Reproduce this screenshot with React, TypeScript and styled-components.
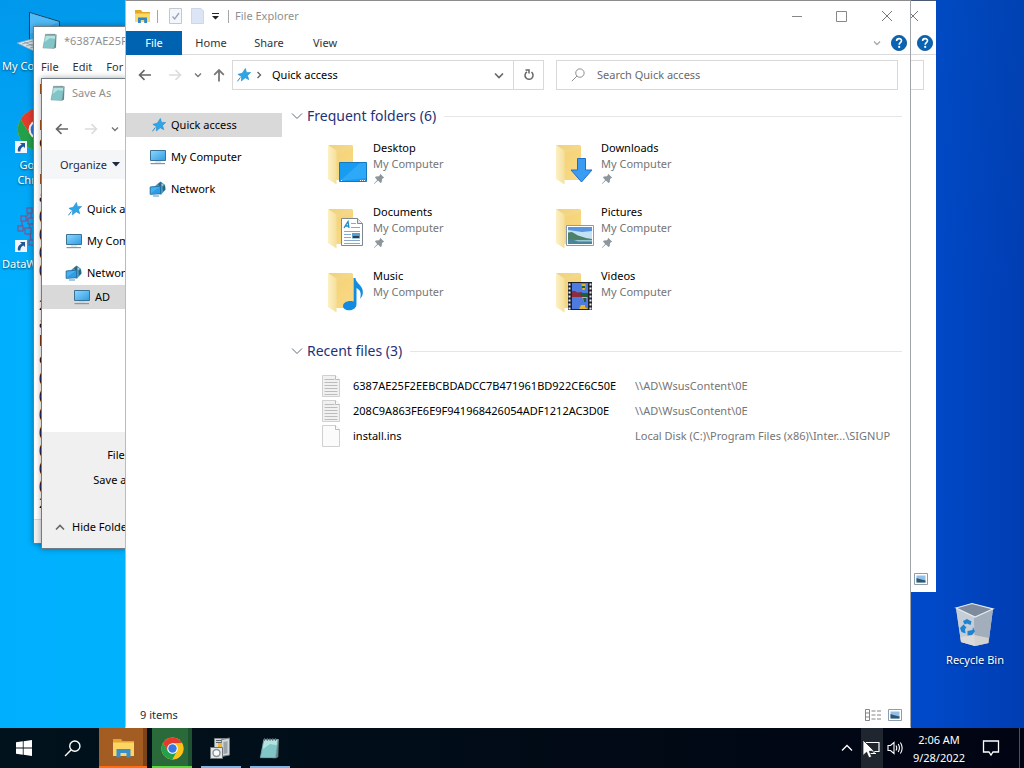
import React from 'react';
import styled, { createGlobalStyle } from 'styled-components';

const GlobalStyle = createGlobalStyle`
  * { box-sizing: border-box; }
  body {
    margin: 0;
    overflow: hidden;
    font-family: 'Noto Sans', 'Open Sans', sans-serif;
    font-size: 11px;
    line-height: 16px;
    color: #000;
  }
  button, input, textarea { font: inherit; color: inherit; }
  button { padding: 0; border: 0; background: none; }
  svg { display: block; flex: none; }
  ul { list-style: none; margin: 0; padding: 0; }
`;

/* ---------- desktop ---------- */

const Screen = styled.div`
  display: flex;
  flex-direction: column;
  height: 100vh;
`;

const Desktop = styled.main`
  position: relative;
  flex: 1;
  overflow: hidden;
  background:
    linear-gradient(180deg, rgba(0, 80, 180, 0.25) 0, rgba(0, 80, 180, 0) 300px),
    linear-gradient(90deg, #00b0ff 0, #00b2fd 12%, #0060d8 60%, #0049c8 91%, #003db2 100%);
`;

const Shortcut = styled.a<{ $left?: number; $right?: number; $top: number; $align?: string }>`
  position: absolute;
  top: ${p => p.$top}px;
  ${p => (p.$right === undefined ? `left: ${p.$left}px;` : `right: ${p.$right}px;`)}
  width: 72px;
  display: flex;
  flex-direction: column;
  align-items: center;
  gap: 2px;
  color: #fff;
  text-decoration: none;
  text-align: center;
  text-shadow: 0 1px 2px rgba(0, 0, 0, 0.6);
  span { align-self: stretch; text-align: ${p => p.$align || 'center'}; line-height: 15px; white-space: nowrap; }
`;

const Win = styled.section`
  position: absolute;
  display: flex;
  flex-direction: column;
  background: #fff;
  border: 1px solid #6f7b85;
  overflow: hidden;
`;

const NotepadWin = styled(Win)`
  left: 33px; top: 26px; width: 93px; height: 518px;
  box-shadow: 0 0 6px rgba(0, 0, 0, 0.35);
`;
const SaveWin = styled(Win)`
  left: 41px; top: 78px; width: 85px; height: 471px;
  box-shadow: 0 0 6px rgba(0, 0, 0, 0.35);
`;
const BackWin = styled(Win)`
  left: 300px; right: 88px; top: 0; height: 592px;
  border-color: #4a5a70 #fff #fff;
  border-right: 0;
`;
const FrontWin = styled(Win)`
  left: 125px; right: 113px; top: 0; bottom: 0;
  border-color: #8c8c8c #a0a4a8 #fff #9cc4dc;
`;

/* ---------- shared window parts ---------- */

const TitleRow = styled.header<{ $h: number; $pad: number }>`
  display: flex;
  flex: none;
  align-items: center;
  gap: 6px;
  height: ${p => p.$h}px;
  padding-left: ${p => p.$pad}px;
  color: #8f8f8f;
  white-space: nowrap;
`;

const Grow = styled.div`flex: 1;`;

const Caption = styled.button`
  width: 45px;
  height: 28px;
  display: grid;
  place-items: center;
`;
const Captions = styled.div`
  display: flex;
  margin-right: 1px;
`;

const Tiny = styled.button<{ $w: number }>`
  flex: none;
  width: ${p => p.$w}px;
  height: 24px;
  display: grid;
  place-items: center;
`;

const Divider = styled.i`
  width: 1px;
  height: 13px;
  background: #a5a5a5;
`;

const QuickButtons = styled.div`
  display: flex;
`;

/* ---------- explorer ---------- */

const Ribbon = styled.nav`
  display: flex;
  align-items: center;
  height: 24px;
  border-bottom: 1px solid #dadbdc;
  padding-right: 3px;
  color: #333;
`;
const FileTab = styled.button`
  width: 56px;
  height: 24px;
  background: #0063b1;
  color: #fff;
`;
const Tab = styled.button<{ $w: number }>`
  width: ${p => p.$w}px;
  height: 24px;
`;

const AddressRow = styled.div`
  display: flex;
  align-items: center;
  height: 40px;
  padding-right: 12px;
`;
const AddressBox = styled.div`
  flex: 1;
  display: flex;
  align-items: center;
  height: 30px;
  margin-left: 4px;
  padding-left: 4px;
  border: 1px solid #d9d9d9;
  span { flex: 1; padding-left: 5px; }
`;
const RefreshButton = styled.button`
  width: 30px;
  height: 28px;
  border-left: 1px solid #d9d9d9;
  display: grid;
  place-items: center;
`;
const SearchBox = styled.label`
  width: 342px;
  height: 30px;
  margin-left: 12px;
  padding-left: 14px;
  display: flex;
  align-items: center;
  gap: 12px;
  border: 1px solid #d9d9d9;
  input {
    flex: 1;
    min-width: 0;
    border: 0;
    padding: 0;
    outline: 0;
    background: none;
  }
  input::placeholder { color: #6a6a6a; opacity: 1; }
`;

const ExplorerBody = styled.div`
  flex: 1;
  display: flex;
  min-height: 0;
  padding-top: 10px;
`;
const NavPane = styled.ul`
  width: 156px;
  padding-top: 8px;
  display: flex;
  flex-direction: column;
  gap: 8px;
`;
const NavItem = styled.li<{ $selected?: boolean; $indent: number }>`
  height: 24px;
  display: flex;
  align-items: center;
  gap: 5px;
  padding-left: ${p => p.$indent}px;
  background: ${p => (p.$selected ? '#d9d9d9' : 'transparent')};
  white-space: nowrap;
`;
const Content = styled.div`
  flex: 1;
  min-width: 0;
  padding: 0 8px 0 9px;
`;
const GroupHeading = styled.h2`
  display: flex;
  align-items: center;
  gap: 4px;
  height: 22px;
  margin: 0;
  font-size: 14px;
  font-weight: 400;
  color: #1e3277;
  &::after { content: ''; flex: 1; height: 1px; margin-left: 4px; background: #e6e6e6; }
`;
const FolderGrid = styled.ul`
  display: grid;
  grid-template-columns: repeat(auto-fill, 228px);
  grid-auto-rows: 64px;
  padding: 13px 0 8px 33px;
`;
const Folder = styled.li`
  display: flex;
  gap: 1px;
`;
const FolderText = styled.div`
  display: flex;
  flex-direction: column;
  small { font-size: 11px; color: #757575; }
  svg { margin-top: 1px; }
`;
const FileTable = styled.table`
  width: 100%;
  margin-top: 11px;
  border-collapse: collapse;
  table-layout: fixed;
  td { padding: 0; height: 25px; white-space: nowrap; }
  td:first-child { width: 62px; padding-left: 31px; }
  td:nth-child(2) { width: 282px; }
  td:last-child { color: #757575; }
`;
const StatusBar = styled.footer`
  height: 24px;
  display: flex;
  align-items: center;
  gap: 6px;
  padding: 0 8px 0 14px;
  color: #1e2a44;
`;

/* ---------- notepad and save dialog ---------- */

const MenuRow = styled.div`
  display: flex;
  flex: none;
  height: 24px;
  align-items: center;
  gap: 14px;
  padding-left: 7px;
  color: #333;
`;
const NoteText = styled.textarea`
  flex: 1;
  padding: 1px 5px;
  border: 0;
  outline: 0;
  resize: none;
  overflow: hidden;
  white-space: pre;
  font-size: 14px;
  line-height: 18px;
`;
const NoteStatus = styled.div`
  height: 24px;
  background: #f0f0f0;
  border-top: 1px solid #d7d7d7;
`;
const DialogNav = styled.div`
  display: flex;
  flex: none;
  align-items: center;
  height: 43px;
  padding-left: 6px;
`;
const Organize = styled.div`
  display: flex;
  flex: none;
  align-items: center;
  height: 29px;
  padding-left: 18px;
  background: #f5f6f7;
  color: #1e2a44;
  button { display: flex; align-items: center; gap: 5px; }
`;
const Tree = styled.ul`
  flex: 1;
  padding-top: 18px;
`;
const TreeItem = styled(NavItem)<{ $gap?: number }>`
  margin-bottom: ${p => p.$gap || 0}px;
`;
const DialogFooter = styled.div`
  flex: none;
  height: 116px;
  padding-top: 10px;
  background: #f0f0f0;
  white-space: nowrap;
`;
const FieldLabel = styled.div`
  width: 118px;
  height: 25px;
  display: flex;
  align-items: center;
  justify-content: flex-end;
`;
const HideButton = styled.button`
  display: flex;
  align-items: center;
  gap: 7px;
  height: 24px;
  margin: 23px 0 0 13px;
`;

/* ---------- taskbar ---------- */

const Taskbar = styled.footer`
  display: flex;
  align-items: stretch;
  height: 40px;
  color: #fff;
  background: linear-gradient(90deg, #00121c, #010a16 60%, #010413);
`;
const TaskButton = styled.button<{ $w: number; $bg?: string; $line?: string; $gap?: number }>`
  width: ${p => p.$w}px;
  margin-left: ${p => p.$gap || 0}px;
  display: grid;
  place-items: center;
  background: ${p => p.$bg || 'transparent'};
  border-bottom: 2px solid ${p => p.$line || 'transparent'};
  border-top: 2px solid transparent;
`;
const TrayButton = styled.button<{ $w: number; $hot?: boolean }>`
  width: ${p => p.$w}px;
  display: grid;
  place-items: center;
  background: ${p => (p.$hot ? '#20262f' : 'transparent')};
`;
const Clock = styled.time`
  width: 64px;
  padding-top: 2px;
  display: flex;
  flex-direction: column;
  justify-content: center;
  text-align: center;
  line-height: 18px;
`;
const PeekEdge = styled.div`
  width: 5px;
  margin-left: 8px;
  border-left: 1px solid #4b5060;
`;
const Pointer = styled.div`
  position: absolute;
  right: 148px;
  bottom: 9px;
  pointer-events: none;
`;

/* ---------- icons ---------- */

type Stroke = { d: string; w: number; h: number; c?: string; sw?: number };
const Line = ({ d, w, h, c = '#666', sw = 1 }: Stroke) => (
  <svg width={w} height={h} viewBox={`0 0 ${w} ${h}`} fill="none" stroke={c} strokeWidth={sw}><path d={d} /></svg>
);
const BackArrow = () => <Line w={14} h={12} d="M1.5 6H13M6.5 1.2L1.5 6l5 4.8" sw={1.6} />;
const ForwardArrow = () => <Line w={14} h={12} d="M1 6h11.500M7.500 1.200L12.500 6l-5 4.800" c="#dcdcdc" sw={1.6} />;
const UpArrow = () => <Line w={12} h={14} d="M6 13.500V2M1.200 6.800L6 2l4.800 4.800" c="#777" sw={1.8} />;
const DownTick = ({ c = '#777', sw = 1.4 }) => <Line w={8} h={6} d="M1 1.500l3 3 3-3" c={c} sw={sw} />;
const CloseGlyph = () => <Line w={12} h={12} d="M1 1l10 10M11 1L1 11" c="#777" />;
const GroupTick = () => <Line w={12} h={8} d="M1 1.500l5 5 5-5" c="#5f6b7f" />;

const Help = () => (
  <svg width="16" height="16" viewBox="0 0 16 16">
    <circle cx="8" cy="8" r="7.600" fill="#0a64b4" stroke="#0b4f8f" strokeWidth=".8" />
    <path d="M5.600 6.100c0-3.300 4.900-3.200 4.900-.3 0 1.800-2.300 1.900-2.300 3.900" fill="none" stroke="#fff" strokeWidth="1.600" />
    <circle cx="8.200" cy="11.900" r="1.100" fill="#fff" />
  </svg>
);

const SmallExplorer = () => (
  <svg width="17" height="15" viewBox="0 0 17 15">
    <path d="M1 1h6l1.500 2H16v10H1z" fill="#e3a827" />
    <path d="M1 4.500h15V13H1z" fill="#fbd966" />
    <path d="M4 14V8.500h9V14h-2.800v-3H6.800v3z" fill="#2e86c8" />
  </svg>
);
const CheckPage = () => (
  <svg width="13" height="16" viewBox="0 0 13 16">
    <path d="M.5.5h12v15H.5z" fill="#f3f6fa" stroke="#c2c8d2" />
    <path d="M3.500 8.500l2.200 2.500L10 5" fill="none" stroke="#98a3b8" strokeWidth="1.300" />
  </svg>
);
const BluePage = () => (
  <svg width="13" height="16" viewBox="0 0 13 16">
    <path d="M.5.5h9.500l2.500 2.500v12.500H.5z" fill="#dbe5f5" stroke="#ccd7e9" />
  </svg>
);
const Star = () => (
  <svg width="14" height="14" viewBox="0 0 14 14">
    <path d="M8.400.4l1.100 4 4.200.1-3.200 2.900 1.300 4.300-3.600-1.900L4.300 13l.3-4.300L.9 6.300l4.300-1.100z" fill="#2ba6ea" stroke="#1f80c0" strokeWidth=".5" />
    <path d="M.4 13.400l3-4" stroke="#2b86bd" />
  </svg>
);
const Monitor = () => (
  <svg width="17" height="16" viewBox="0 0 17 16">
    <defs>
      <linearGradient id="scr" x1="0" y1="0" x2="1" y2="1"><stop offset="0" stopColor="#8fd8fb" /><stop offset="1" stopColor="#2d9be6" /></linearGradient>
    </defs>
    <path d="M1.500 1.500h15v10h-15z" fill="url(#scr)" stroke="#3a7298" />
    <path d="M6 12.500h6v1H6z" fill="#b5cfdd" />
    <path d="M1.500 14H16v1.200H1.500z" fill="#8697a3" />
  </svg>
);
const NetworkIcon = () => (
  <svg width="17" height="16" viewBox="0 0 17 16">
    <path d="M6.500 4.500L11.500.5l4.500 3.200.5 5-4.500 5-5-2z" fill="#4f98b8" />
    <path d="M9 3l3-2 1.500 3-3 1.500zM13.500 5.500l2.500-1 .3 4-2.300 2z" fill="#2b6580" />
    <path d="M12 2.500l2.500 1-1.500 2z" fill="#a7d4e4" />
    <path d="M1.200 6l10.300-.8v7.500l-10.300.6z" fill="#45b1f2" stroke="#2472a6" />
    <path d="M2 12L11 5.700v6.500z" fill="#1f8fdc" opacity=".6" />
    <path d="M4 15h6" stroke="#4d94c0" />
  </svg>
);
const Pushpin = () => (
  <svg width="12" height="12" viewBox="0 0 12 12">
    <path d="M7.200.8l4 4-1.300.5-.9 1-.3 3L7.500 10 5 7.600 1.200 11 .8 10.700l3.400-3.800L2 4.500l.8-1 3-.3 1-1z" fill="#8d969c" />
  </svg>
);
const NotepadIcon = ({ s = 16 }) => (
  <svg width={s} height={s} viewBox="0 0 16 16">
    <path d="M4 2l10.500-.5L14 14.500l-1.500 1-9-.5z" fill="#6d7f86" />
    <path d="M3.500 1.800h10.300L12 15H1z" fill="#b4e2e0" stroke="#6a9da2" strokeWidth=".6" />
    <path d="M2 9.500L8 5l5 1-1.200 8.800H1.200z" fill="#5fb3b8" opacity=".6" />
    <path d="M4 .8v2M6 .8v2M8 .8v2M10 .8v2M12 .8v2" stroke="#50606a" strokeWidth=".8" />
  </svg>
);
const FilePage = ({ lines }: { lines: boolean }) => (
  <svg width="19" height="22" viewBox="0 0 19 22">
    <path d="M.5.500h13l4 4v17H.5z" fill={lines ? '#f1f1ef' : '#fafbfa'} stroke="#cfd1d1" />
    <path d="M13.500.5v4h4" fill="#fff" stroke="#babdbd" />
    {lines && <path d="M2.500 4.500h10M2.500 7.500h13M2.500 10.500h13M2.500 13.500h13M2.500 16.500h13M2.500 19.500h13" stroke="#bbbdbd" />}
  </svg>
);
const PicView = () => (
  <svg width="14" height="12" viewBox="0 0 14 12">
    <path d="M.5.5h13v11H.5z" fill="#fff" stroke="#8d9dac" />
    <path d="M2.500 2.500h9v7h-9z" fill="#8fc1ea" />
    <path d="M2.500 5l3 1 6 1.500v2h-9z" fill="#33566b" />
  </svg>
);
const DetailsView = () => (
  <svg width="17" height="12" viewBox="0 0 17 12" fill="none" stroke="#858585">
    <path d="M.5.5h4v11h-4zM.5 4h4M.5 8h4" />
    <path d="M6.500 2h4M12 2h4M6.500 6h4M12 6h4M6.500 10h4M12 10h4" />
  </svg>
);

const overlays: Record<string, React.ReactNode> = {
  Desktop: (
    <>
      <path d="M15.500 22.500h27v19h-27z" fill="#189cf2" stroke="#1577bd" />
      <path d="M16 41L36 23h6v15z" fill="#3db2fa" opacity=".6" />
      <path d="M17 40.500h2M36 40.500h5" stroke="#fff" strokeDasharray="1 1" />
    </>
  ),
  Downloads: <path d="M25.500 18.500h8V30h6.500L29.500 42 19 30h6.500z" fill="#3a9df3" stroke="#1f70c4" />,
  Documents: (
    <>
      <path d="M17.500 14.500h16l5 5v22h-21z" fill="#fff" stroke="#7c8791" />
      <path d="M33.500 14.500v5h5" fill="#e3e8ec" stroke="#7c8791" />
      <path d="M20 24l4-6.500 1 6.500M21.500 22h3.500" fill="none" stroke="#1b8ac0" strokeWidth="1.300" />
      <path d="M27 19.500h5M27 23.500h9M20 27.500h16M20 30.500h7M20 33.500h7M20 36.500h16M20 39.500h16" stroke="#8aa7cb" />
      <path d="M28 29h8v5.500h-8z" fill="#5ba0c8" /><path d="M29 32h6v2h-6z" fill="#253e55" />
    </>
  ),
  Pictures: (
    <>
      <path d="M14.500 21.500h27v20h-27z" fill="#fff" stroke="#8b9bab" />
      <path d="M16 23h24v17H16z" fill="#c3e2f6" />
      <path d="M16 23h24v4l-10 1-14-2z" fill="#5a96e0" />
      <path d="M16 28.500l4-.5 6 3.500 8 2.500 6 1v1H16z" fill="#4f8168" />
      <path d="M16 35.500h24V40H16z" fill="#48859a" />
      <path d="M22 36h18v1.500H26z" fill="#9cc6d2" />
    </>
  ),
  Music: <path d="M29.500 10h2c0 5.500 8.500 7.500 7.300 15.500-.5 2.800-1.800 4.500-2.600 5 1.600-6.500-.6-8.800-3.700-10.500V36c0 4-3.600 6.300-7.500 6.300-3.600 0-6-1.800-6-4.300 0-3.200 4.400-5.800 10.500-4.600z" fill="#128ce0" />,
  Videos: (
    <>
      <path d="M16 14h24v28H16z" fill="#20232e" />
      <path d="M17.500 15.500v26M38.500 15.500v26" stroke="#eef0f2" strokeWidth="2" strokeDasharray="2 2" />
      <path d="M20 15h16v12H20zM20 29h16v12H20z" fill="#4d7be0" />
      <path d="M20 23h3l2 1.500 5-.5v3H20zM20 27h16v2H20z" fill="#8c2c3c" />
      <path d="M29.500 16h4v3l-1 3h-2zM30 29h5l-3 5zM29 37h4v2l3 2h-9z" fill="#e6b729" />
      <path d="M30 18h3v2h-3zM29 25h7v4h-3l-5-2zM31 30h3v4h-2z" fill="#1c5f38" />
    </>
  ),
};

const FolderIcon = ({ kind }: { kind: string }) => (
  <svg width="48" height="48" viewBox="0 0 48 48">
    <defs>
      <linearGradient id="fb" x1="0" y1="0" x2="1" y2="1"><stop offset="0" stopColor="#efd27b" /><stop offset="1" stopColor="#fbe09a" /></linearGradient>
      <linearGradient id="ff" x1="0" y1="0" x2="1" y2="0"><stop offset="0" stopColor="#fdf0c4" /><stop offset="1" stopColor="#f5df9b" /></linearGradient>
    </defs>
    <path d="M4.500 5H28l1 1v34H12z" fill="url(#fb)" />
    <path d="M13 14l16-6v32H13z" fill="#f9cf68" opacity=".4" />
    <path d="M4 5l8.500 5.500V44.500L4 39z" fill="url(#ff)" />
    {overlays[kind]}
  </svg>
);

const Chrome = ({ s }: { s: number }) => (
  <svg width={s} height={s} viewBox="0 0 48 48">
    <circle cx="24" cy="24" r="23" fill="#fbc116" />
    <path d="M4.100 12.500A23 23 0 0 1 43.900 12.500L24 13 14.500 29.500z" fill="#e33b2e" />
    <path d="M4.100 12.500A23 23 0 0 0 24 47l9.500-17.500-9.500 5.500-9.500-5.500z" fill="#22a04b" />
    <path d="M24 13h19.900A23 23 0 0 1 24 47l9.500-17z" fill="#fbc116" />
    <circle cx="24" cy="24" r="11" fill="#fff" />
    <circle cx="24" cy="24" r="8.800" fill="#3478e8" />
  </svg>
);
const ShortcutMark = () => (
  <g transform="translate(1 34)">
    <path d="M0 0h12v12H0z" fill="#f2f6fa" />
    <path d="M5 2h5v5L8.300 5.400C6 6.800 5.300 8 5.400 10.500H3C2.300 7 3.800 5 6.700 3.700z" fill="#1f559c" />
  </g>
);
const ChromeShortcut = () => (
  <svg width="48" height="48" viewBox="0 0 48 48">
    <svg x="3" y="1" width="43" height="43"><Chrome s={43} /></svg>
    <ShortcutMark />
  </svg>
);
const DataShortcut = () => (
  <svg width="48" height="48" viewBox="0 0 48 48">
    <g fill="none" stroke="#7d5590" strokeWidth="1.200">
      <rect x="13" y="2" width="5" height="5" /><rect x="7" y="10" width="5" height="5" /><rect x="14" y="12" width="6" height="6" />
      <rect x="4" y="20" width="5" height="5" /><rect x="11" y="22" width="6" height="6" /><rect x="15" y="34" width="5" height="5" />
      <path d="M15 7l-3 4M17 7v5M12 14h2M8 15v5M9 23h2M16 18l-1 4M16 28l1 6" />
    </g>
    <ShortcutMark />
  </svg>
);
const PcShortcut = () => (
  <svg width="48" height="48" viewBox="0 0 48 48">
    <path d="M15.500 4.500l30 9v25l-30-6z" fill="#35aef4" stroke="#243e54" />
    <path d="M16 5l29 9-29 12z" fill="#5cc0f8" opacity=".7" />
    <path d="M3 35l15-4 18 7-14 6z" fill="#d7e3ea" stroke="#8fa3b0" strokeWidth=".6" />
    <path d="M8 36l11-3M12 38l11-3M16 40l11-3M10 34l16 7" stroke="#8498a5" strokeWidth=".8" />
  </svg>
);
const RecycleBin = () => (
  <svg width="48" height="48" viewBox="0 2 48 48">
    <path d="M5 8l37 1-4.500 34L24 46 10 42z" fill="#b4bec9" />
    <path d="M5 8l18 9 1 29-14-4z" fill="#c5cdd6" />
    <path d="M23 17l19-8-4.500 34L24 46z" fill="#a3aebd" />
    <path d="M9.500 37l14-2 14.300 3-.6 5L24 46 10 42z" fill="#e1ded8" opacity=".75" />
    <path d="M5 8L21 3.500 42 9l-18 8z" fill="#7e8b9d" stroke="#e8edf3" strokeWidth="1.200" />
    <path d="M12 21l4-2 4.500 2.500-1 3.500-3.500-1.500-2.500 1zM9 28l3.500-3.500 3 3-1.500 1.500.5 4.500-4-1.500zM16.500 31l5-1 .5-3 2 4.500-3 3.500-4.500.5z" fill="#1e83d2" />
  </svg>
);
const TaskExplorer = () => (
  <svg width="23" height="20" viewBox="0 0 23 20">
    <path d="M1 1h8l1.500 2H22v5H1z" fill="#e3a52b" />
    <path d="M1 4.500h21V18H1z" fill="#fcd563" />
    <path d="M4.500 19.500V11h14v8.500h-4V15h-6v4.500z" fill="#3a8fcb" />
  </svg>
);
const ServerApp = () => (
  <svg width="24" height="24" viewBox="0 0 24 24">
    <path d="M5.500 2.500h13v15h-13z" fill="#d5d9db" stroke="#83898d" />
    <path d="M7 4.500h10M7 6.500h10" stroke="#5d6468" />
    <path d="M12.500 3.500l8-1.500v17l-8 1.500z" fill="#d0d5d8" stroke="#777d81" />
    <path d="M14.500 6l4-.8v12l-4 .8z" fill="#9ca3a8" />
    <path d="M9 7h4v8H9z" fill="#e9b93c" />
    <path d="M1.500 11.500h12v11h-12z" fill="#e3e6e8" stroke="#70767a" />
    <circle cx="7.500" cy="17" r="3.500" fill="#fafafa" stroke="#8b9194" strokeWidth="1.400" />
  </svg>
);
const WindowsLogo = () => (
  <svg width="16" height="16" viewBox="0 0 16 16" fill="#fff">
    <path d="M0 2.300l6.800-1v6.300H0zM7.600 1.200L16 0v7.600H7.600zM0 8.400h6.800v6.300l-6.800-1zM7.600 8.400H16V16l-8.400-1.200z" />
  </svg>
);

const Magnifier = ({ s, c, sw }: { s: number; c: string; sw: number }) => (
  <svg width={s} height={s} viewBox="0 0 16 16" fill="none" stroke={c} strokeWidth={sw}>
    <circle cx="10.200" cy="5.800" r="4.800" /><path d="M6.800 9.200L1 15" />
  </svg>
);

/* ---------- composed parts ---------- */

const folders = [
  { name: 'Desktop', pinned: true },
  { name: 'Downloads', pinned: true },
  { name: 'Documents', pinned: true },
  { name: 'Pictures', pinned: true },
  { name: 'Music', pinned: false },
  { name: 'Videos', pinned: false },
];
const files = [
  { name: '6387AE25F2EEBCBDADCC7B471961BD922CE6C50E', path: '\\\\AD\\WsusContent\\0E', lines: true },
  { name: '208C9A863FE6E9F941968426054ADF1212AC3D0E', path: '\\\\AD\\WsusContent\\0E', lines: true },
  { name: 'install.ins', path: 'Local Disk (C:)\\Program Files (x86)\\Inter...\\SIGNUP', lines: false },
];
const note = ['P', '', 'D', 'C', '', 'P', 'a', '(', '(', '(', '(', '', '2', 'a', 'b', 'c', '(', '(', '(', '(', '(', '(', '(', '2'].join('\n');

const CaptionButtons = () => (
  <Captions>
    <Caption aria-label="Minimize"><Line w={10} h={10} d="M0 5.500h10" c="#888" /></Caption>
    <Caption aria-label="Maximize"><Line w={11} h={11} d="M.5.5h10v10H.5z" c="#888" /></Caption>
    <Caption aria-label="Close"><CloseGlyph /></Caption>
  </Captions>
);

const BackExplorer = () => (
  <BackWin>
    <TitleRow $h={30} $pad={8}><Grow /><CaptionButtons /></TitleRow>
    <Ribbon><Grow /><Help /></Ribbon>
    <AddressRow><Grow /><SearchBox as="div" /></AddressRow>
    <ExplorerBody />
    <StatusBar><Grow /><PicView /></StatusBar>
  </BackWin>
);

const FrontExplorer = () => (
  <FrontWin>
    <TitleRow $h={30} $pad={8}>
      <SmallExplorer />
      <Divider />
      <QuickButtons>
        <Tiny $w={22} aria-label="Properties"><CheckPage /></Tiny>
        <Tiny $w={22} aria-label="New folder"><BluePage /></Tiny>
        <Tiny $w={14} aria-label="Customize">
          <svg width="7" height="7" viewBox="0 0 7 7"><path d="M0 0h7v1H0zM0 3h7L3.500 6.500z" fill="#222" /></svg>
        </Tiny>
      </QuickButtons>
      <Divider />
      File Explorer
      <Grow />
      <CaptionButtons />
    </TitleRow>
    <Ribbon>
      <FileTab>File</FileTab>
      <Tab $w={58}>Home</Tab>
      <Tab $w={58}>Share</Tab>
      <Tab $w={54}>View</Tab>
      <Grow />
      <Tiny $w={28} aria-label="Expand ribbon"><DownTick c="#aaa" /></Tiny>
      <Help />
    </Ribbon>
    <AddressRow>
      <Tiny $w={38} aria-label="Back"><BackArrow /></Tiny>
      <Tiny $w={22} aria-label="Forward"><ForwardArrow /></Tiny>
      <Tiny $w={24} aria-label="Recent locations"><DownTick /></Tiny>
      <Tiny $w={18} aria-label="Up"><UpArrow /></Tiny>
      <AddressBox>
        <Star />
        <Tiny $w={16} aria-label="Locations"><Line w={6} h={8} d="M1.500 1l3 3-3 3" sw={1.4} /></Tiny>
        <span>Quick access</span>
        <Tiny $w={28} aria-label="Previous locations"><Line w={10} h={7} d="M1 1.500l4 4 4-4" sw={1.6} /></Tiny>
        <RefreshButton aria-label="Refresh">
          <Line w={12} h={12} d="M8.500 3.200A4 4 0 1 1 4 2.900M2.500 1H6v3.600" sw={1.5} />
        </RefreshButton>
      </AddressBox>
      <SearchBox>
        <Magnifier s={14} c="#8a8a8a" sw={1.1} />
        <input placeholder="Search Quick access" aria-label="Search Quick access" />
      </SearchBox>
    </AddressRow>
    <ExplorerBody>
      <NavPane>
        <NavItem $selected $indent={26}><Star />Quick access</NavItem>
        <NavItem $indent={23}><Monitor />My Computer</NavItem>
        <NavItem $indent={23}><NetworkIcon />Network</NavItem>
      </NavPane>
      <Content>
        <GroupHeading><GroupTick />Frequent folders (6)</GroupHeading>
        <FolderGrid>
          {folders.map(f => (
            <Folder key={f.name}>
              <FolderIcon kind={f.name} />
              <FolderText>
                <span>{f.name}</span>
                <small>My Computer</small>
                {f.pinned && <Pushpin />}
              </FolderText>
            </Folder>
          ))}
        </FolderGrid>
        <GroupHeading><GroupTick />Recent files (3)</GroupHeading>
        <FileTable>
          <tbody>
            {files.map(f => (
              <tr key={f.name}>
                <td><FilePage lines={f.lines} /></td>
                <td>{f.name}</td>
                <td>{f.path}</td>
              </tr>
            ))}
          </tbody>
        </FileTable>
      </Content>
    </ExplorerBody>
    <StatusBar>9 items<Grow /><DetailsView /><PicView /></StatusBar>
  </FrontWin>
);

const Notepad = () => (
  <NotepadWin>
    <TitleRow $h={28} $pad={8}><NotepadIcon />*6387AE25F</TitleRow>
    <MenuRow><span>File</span><span>Edit</span><span>For</span></MenuRow>
    <NoteText aria-label="Text" defaultValue={note} />
    <NoteStatus />
  </NotepadWin>
);

const SaveAs = () => (
  <SaveWin>
    <TitleRow $h={28} $pad={8}><NotepadIcon />Save As</TitleRow>
    <DialogNav>
      <Tiny $w={28} aria-label="Back"><BackArrow /></Tiny>
      <Tiny $w={30} aria-label="Forward"><ForwardArrow /></Tiny>
      <Tiny $w={18} aria-label="Recent locations"><DownTick /></Tiny>
    </DialogNav>
    <Organize>
      <button>Organize<svg width="8" height="5" viewBox="0 0 8 5"><path d="M0 0h8L4 4.500z" fill="#1e2a44" /></svg></button>
    </Organize>
    <Tree>
      <TreeItem $indent={26} $gap={8}><Star />Quick access</TreeItem>
      <TreeItem $indent={23} $gap={8}><Monitor />My Computer</TreeItem>
      <TreeItem $indent={23}><NetworkIcon />Network</TreeItem>
      <TreeItem $indent={31} $selected><Monitor />AD</TreeItem>
    </Tree>
    <DialogFooter>
      <FieldLabel>File name:</FieldLabel>
      <FieldLabel>Save as type:</FieldLabel>
      <HideButton><Line w={10} h={7} d="M1 5.500l4-4 4 4" sw={1.6} />Hide Folders</HideButton>
    </DialogFooter>
  </SaveWin>
);

export default function App() {
  return (
    <Screen>
      <GlobalStyle />
      <Desktop>
        <Shortcut href="#" $left={2} $top={8} $align="left"><PcShortcut /><span>My Co</span></Shortcut>
        <Shortcut href="#" $left={2} $top={107}><ChromeShortcut /><span>Google<br />Chrome</span></Shortcut>
        <Shortcut href="#" $left={2} $top={206} $align="left"><DataShortcut /><span>DataW</span></Shortcut>
        <Shortcut href="#" $right={13} $top={602}><RecycleBin /><span>Recycle Bin</span></Shortcut>
        <Notepad />
        <SaveAs />
        <BackExplorer />
        <FrontExplorer />
      </Desktop>
      <Taskbar>
        <TaskButton $w={48} aria-label="Start"><WindowsLogo /></TaskButton>
        <TaskButton $w={48} aria-label="Search"><Magnifier s={17} c="#fff" sw={1.3} /></TaskButton>
        <TaskButton $w={48} $gap={3} $bg="linear-gradient(90deg, #a35d22 44px, #7c4318 44px)" $line="#ff6d10" aria-label="File Explorer"><TaskExplorer /></TaskButton>
        <TaskButton $w={40} $gap={5} $bg="linear-gradient(90deg, #2a6a3a 36px, #1d5230 36px)" $line="#56dd3c" aria-label="Google Chrome"><Chrome s={23} /></TaskButton>
        <TaskButton $w={40} $gap={9} $line="#7fb4e4" aria-label="Server console"><ServerApp /></TaskButton>
        <TaskButton $w={40} $gap={9} $line="#7fb4e4" aria-label="Notepad"><NotepadIcon s={22} /></TaskButton>
        <Grow />
        <TrayButton $w={28} aria-label="Show hidden icons"><Line w={12} h={8} d="M1 6.500l5-5 5 5" c="#fff" sw={1.3} /></TrayButton>
        <TrayButton $w={22} $hot aria-label="Network">
          <Line w={18} h={16} d="M2 2.500h14v9H9M11 11.500v2M7 13.500h6" c="#fff" sw={1.2} />
        </TrayButton>
        <TrayButton $w={24} aria-label="Volume">
          <Line w={16} h={14} d="M1 4.500h2.500L7 1.500v11L3.500 9.500H1zM9 4.500q1.500 2.500 0 5M11.200 3q2.500 4 0 8M13.400 1.500q3.500 5.500 0 11" c="#fff" sw={1.1} />
        </TrayButton>
        <Clock><span>2:06 AM</span><span>9/28/2022</span></Clock>
        <TrayButton $w={40} aria-label="Notifications">
          <Line w={18} h={18} d="M1.500 2h15v11H11l-2 3-2-3H1.500z" c="#fff" sw={1.3} />
        </TrayButton>
        <PeekEdge />
      </Taskbar>
      <Pointer>
        <svg width="14" height="20" viewBox="0 0 14 20"><path d="M1 1v15.500l3.600-3.300 2.300 5.600 2.700-1.100-2.300-5.400h5z" fill="#fff" stroke="#111" strokeWidth=".7" /></svg>
      </Pointer>
    </Screen>
  );
}
